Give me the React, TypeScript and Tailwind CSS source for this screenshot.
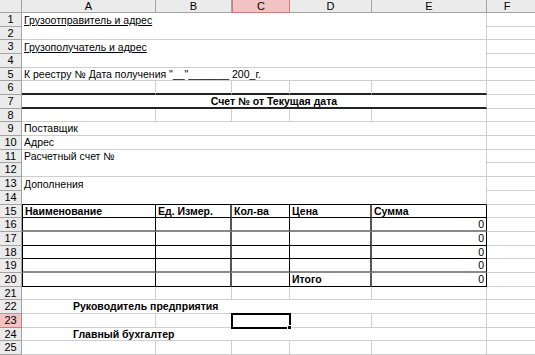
import React from "react";

const colW = ["w-[134px]", "w-[76px]", "w-[58px]", "w-[82px]", "w-[115px]"];
const letters = ["A", "B", "C", "D", "E"];

type RowDef = {
  n: number;
  h: string;
  bottom: "none" | "gray" | "black" | "thick";
  split?: boolean;
  text?: React.ReactNode;
  textClass?: string;
};

const rows: RowDef[] = [
  { n: 1, h: "h-[14px]", bottom: "none", text: <span className="underline">Грузоотправитель и адрес</span> },
  { n: 2, h: "h-[13px]", bottom: "gray" },
  { n: 3, h: "h-[14px]", bottom: "none", text: <span className="underline">Грузополучатель и адрес</span> },
  { n: 4, h: "h-[14px]", bottom: "gray" },
  { n: 5, h: "h-[13px]", bottom: "gray", text: "К реестру № Дата получения \"__\"_______ 200_г." },
  { n: 6, h: "h-[14px]", bottom: "thick", split: true },
  { n: 7, h: "h-[14px]", bottom: "thick", text: "Счет № от Текущая дата", textClass: "justify-center pl-[40px] font-bold" },
  { n: 8, h: "h-[13px]", bottom: "gray", split: true },
  { n: 9, h: "h-[14px]", bottom: "gray", text: "Поставщик" },
  { n: 10, h: "h-[14px]", bottom: "gray", text: "Адрес" },
  { n: 11, h: "h-[13px]", bottom: "none", text: "Расчетный счет №" },
  { n: 12, h: "h-[14px]", bottom: "gray" },
  { n: 13, h: "h-[14px]", bottom: "none", text: "Дополнения" },
  { n: 14, h: "h-[14px]", bottom: "black" },
];

const tableRows = [
  { n: 15, h: "h-[13px]", line: "border-b border-b-black" },
  { n: 16, h: "h-[14px]", line: "border-b-2 border-b-[#8a8a8a]" },
  { n: 17, h: "h-[14px]", line: "border-b border-b-black" },
  { n: 18, h: "h-[13px]", line: "border-b border-b-black" },
  { n: 19, h: "h-[14px]", line: "border-b-2 border-b-[#8a8a8a]" },
  { n: 20, h: "h-[14px]", line: "border-b border-b-black" },
];

const bottomRows: RowDef[] = [
  { n: 21, h: "h-[13px]", bottom: "gray", split: true },
  { n: 22, h: "h-[14px]", bottom: "gray", text: "Руководитель предприятия", textClass: "pl-[51px] font-bold" },
  { n: 23, h: "h-[14px]", bottom: "gray", split: true },
  { n: 24, h: "h-[13px]", bottom: "gray", text: "Главный бухгалтер", textClass: "pl-[51px] font-bold" },
  { n: 25, h: "h-[14px]", bottom: "gray", split: true },
];

function RowHead({ n, selected }: { n: number; selected?: boolean }) {
  return (
    <div
      className={
        selected
          ? "flex w-[22px] shrink-0 items-center justify-center border-b border-r border-[#d27c7c] bg-[#f3c2c2] text-[11px] leading-none"
          : "flex w-[22px] shrink-0 items-center justify-center border-b border-r border-[#a4a4a4] bg-[#ebebeb] text-[11px] leading-none"
      }
    >
      {n}
    </div>
  );
}

function FCell() {
  return <div className="flex-1 border-b border-[#cfcfcf]" />;
}

function SheetRow({ r }: { r: RowDef }) {
  const bottom =
    r.bottom === "gray"
      ? "border-b border-b-[#cfcfcf]"
      : r.bottom === "black"
      ? "border-b border-b-black"
      : r.bottom === "thick"
      ? "border-b-2 border-b-[#222]"
      : "";
  return (
    <div className={"flex " + r.h}>
      <RowHead n={r.n} selected={r.n === 23} />
      {r.split ? (
        colW.map((w, i) => (
          <div
            key={i}
            className={"relative shrink-0 border-r border-r-[#cfcfcf] " + w + " " + bottom}
          >
            {r.n === 23 && i === 2 && (
              <div className="absolute -left-[1px] -top-[1px] z-10 h-[16px] w-[60px] border-2 border-black">
                <div className="absolute -bottom-[3px] -right-[3px] h-[5px] w-[5px] border border-white bg-black" />
              </div>
            )}
          </div>
        ))
      ) : (
        <div
          className={
            "flex w-[465px] shrink-0 items-center border-r border-r-[#cfcfcf] pl-[2px] whitespace-nowrap " +
            bottom +
            " " +
            (r.textClass ?? "")
          }
        >
          {r.text}
        </div>
      )}
      <FCell />
    </div>
  );
}

function TableRow({ n, h, line }: { n: number; h: string; line: string }) {
  const head = n === 15;
  const sum = head ? "Сумма" : "0";
  const cells = head
    ? ["Наименование", "Ед. Измер.", "Кол-ва", "Цена"]
    : ["", "", "", n === 20 ? "Итого" : ""];
  const vlines = [
    "border-r border-r-black",
    "border-r-2 border-r-[#555]",
    "border-r border-r-black",
    "border-r-2 border-r-[#555]",
  ];
  return (
    <div className={"flex " + h}>
      <RowHead n={n} />
      {cells.map((t, i) => (
        <div
          key={i}
          className={
            "flex shrink-0 items-center pl-[2px] font-bold whitespace-nowrap " +
            colW[i] +
            " " +
            line +
            " " +
            vlines[i] +
            (i === 0 ? " border-l border-l-black" : "")
          }
        >
          {t}
        </div>
      ))}
      <div
        className={
          "flex w-[115px] shrink-0 items-center border-r border-r-black pl-[2px] pr-[2px] " +
          line +
          (head ? " justify-start font-bold" : " justify-end")
        }
      >
        {sum}
      </div>
      <FCell />
    </div>
  );
}

export default function App() {
  return (
    <div className="h-[355px] w-[535px] overflow-hidden bg-white font-['Liberation_Sans',Arial,sans-serif] text-[10.5px] leading-none text-black">
      <div className="flex h-[13px] text-[11px]">
        <div className="w-[22px] shrink-0 border-b border-r border-[#a4a4a4] bg-[#ebebeb]" />
        {letters.map((l, i) => (
          <div
            key={l}
            className={
              i === 2
                ? "flex shrink-0 items-center justify-center border-b border-r border-l border-[#d27c7c] bg-[#f3c2c2] " + colW[i]
                : "flex shrink-0 items-center justify-center border-b border-r border-[#a4a4a4] bg-[#ebebeb] " + colW[i]
            }
          >
            {l}
          </div>
        ))}
        <div className="flex flex-1 items-center justify-center border-b border-[#a4a4a4] bg-[#ebebeb] pr-[8px]">
          F
        </div>
      </div>
      {rows.map((r) => (
        <SheetRow key={r.n} r={r} />
      ))}
      {tableRows.map((t) => (
        <TableRow key={t.n} {...t} />
      ))}
      {bottomRows.map((r) => (
        <SheetRow key={r.n} r={r} />
      ))}
    </div>
  );
}
